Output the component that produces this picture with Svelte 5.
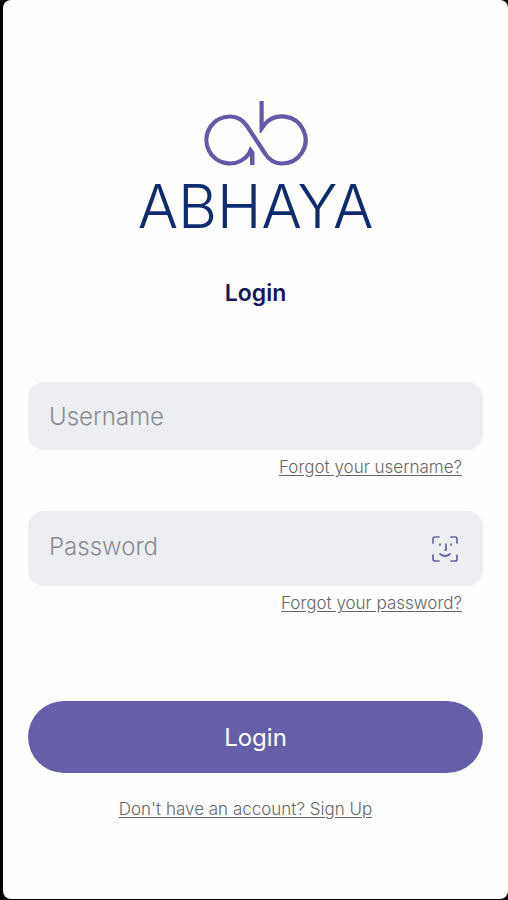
<script lang="ts">
  let username = $state('');
  let password = $state('');
</script>

<main class="screen">
  <header class="brand">
    <svg class="mark" viewBox="0 0 108 68" aria-hidden="true">
      <path
        d="M47 54.700A23.500 23.500 0 1 1 28 17.500C36 17.500 41 21 45 27L63 54.500C67 61 72 64.500 80 64.500A23.500 23.500 0 1 0 62 26"
      />
      <path class="stem" d="M48 47L52.500 53V66H48V57L45 54ZM57.500 2H61.700V24L64 27L59 34H57.500Z" />
    </svg>
    <div class="wordmark">ABHAYA</div>
  </header>

  <h1>Login</h1>

  <form onsubmit={(event) => event.preventDefault()}>
    <div class="field">
      <input type="text" placeholder="Username" aria-label="Username" autocomplete="username" bind:value={username} />
    </div>
    <a class="forgot" href="#username">Forgot your username?</a>

    <div class="field password">
      <input
        type="password"
        placeholder="Password"
        aria-label="Password"
        autocomplete="current-password"
        bind:value={password}
      />
      <button class="face" type="button" aria-label="Sign in with face recognition">
        <svg viewBox="0 0 26 26" aria-hidden="true">
          <path d="M1 7V3Q1 1 3 1H7M19 1H23Q25 1 25 3V7M1 19V23Q1 25 3 25H7M19 25H23Q25 25 25 23V19" />
          <path d="M8 8V9M19 8V9M14 8V14H13M8 18Q13 22 18 18" />
        </svg>
      </button>
    </div>
    <a class="forgot" href="#password">Forgot your password?</a>

    <button class="submit" type="submit">Login</button>
  </form>

  <a class="signup" href="#signup">Don't have an account? Sign Up</a>
</main>

<style>
  :global(body) {
    background: #000;
  }
  .screen {
    box-sizing: border-box;
    display: flex;
    flex-direction: column;
    min-height: calc(100vh - 1px);
    margin-left: 3px;
    padding: 99px 25px 40px;
    border-radius: 8px;
    background: #fefefe;
    font-family: Inter, 'Liberation Sans', sans-serif;
  }
  .brand {
    display: flex;
    flex-direction: column;
    align-items: center;
  }
  .mark {
    width: 108px;
    height: 68px;
    fill: none;
    stroke: #6259a8;
    stroke-width: 4.2;
    stroke-linejoin: miter;
  }
  .stem {
    fill: #6259a8;
    stroke: none;
  }
  .wordmark {
    margin-top: 9px;
    color: #102a70;
    font-size: 60px;
    font-weight: 300;
    font-optical-sizing: none;
    line-height: 60px;
  }
  h1 {
    margin: 43px 0 0;
    color: #17175f;
    font-size: 23px;
    font-weight: 600;
    line-height: 28px;
    text-align: center;
  }
  form {
    display: flex;
    flex-direction: column;
    margin-top: 75px;
  }
  .field {
    box-sizing: border-box;
    display: flex;
    align-items: center;
    height: 68px;
    padding: 0 25px 0 21px;
    border-radius: 16px;
    background: #edeef2;
  }
  .field.password {
    height: 75px;
    margin-top: 34px;
  }
  input {
    flex: 1;
    min-width: 0;
    padding: 2px 0 0;
    border: 0;
    outline: 0;
    background: none;
    color: #333;
    font: 300 24px/32px Inter, 'Liberation Sans', sans-serif;
  }
  .password input {
    padding: 0 0 4px;
  }
  input::placeholder {
    color: #8b8c90;
    opacity: 1;
  }
  .face {
    display: flex;
    padding: 0;
    border: 0;
    background: none;
  }
  .face svg {
    width: 26px;
    height: 26px;
    fill: none;
    stroke: #6663a0;
    stroke-width: 1.7;
    stroke-linecap: round;
  }
  .forgot,
  .signup {
    color: #666;
    font-size: 17px;
    font-weight: 300;
    line-height: 20px;
    text-underline-offset: 2px;
  }
  .forgot {
    align-self: flex-end;
    margin: 7px 21px 0 0;
  }
  .submit {
    height: 72px;
    margin-top: 88px;
    padding: 2px 0 0;
    border: 0;
    border-radius: 36px;
    background: #645fa8;
    color: #fff;
    font: 400 24px/32px Inter, 'Liberation Sans', sans-serif;
  }
  .signup {
    align-self: center;
    margin: 26px 20px 0 0;
  }
</style>
